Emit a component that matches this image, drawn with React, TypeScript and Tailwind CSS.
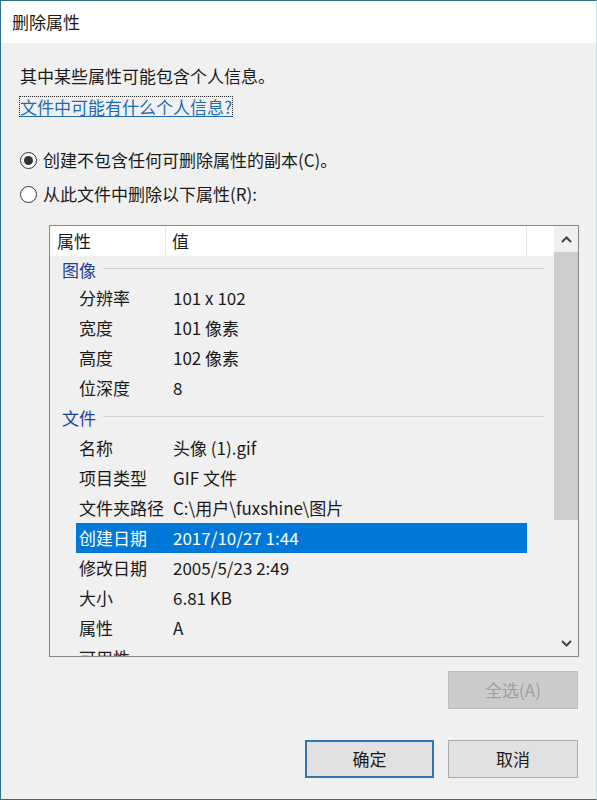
import React from 'react'

const font = { fontFamily: '"Noto Sans CJK SC", "Noto Sans", sans-serif' }

type Row = { label: string; value?: string; group?: boolean; selected?: boolean; h?: string }

const rows: Row[] = [
    { label: '图像', group: true, h: 'h-[27px]' },
    { label: '分辨率', value: '101 x 102' },
    { label: '宽度', value: '101 像素' },
    { label: '高度', value: '102 像素' },
    { label: '位深度', value: '8' },
    { label: '文件', group: true },
    { label: '名称', value: '头像 (1).gif' },
    { label: '项目类型', value: 'GIF 文件' },
    { label: '文件夹路径', value: 'C:\\用户\\fuxshine\\图片' },
    { label: '创建日期', value: '2017/10/27 1:44', selected: true },
    { label: '修改日期', value: '2005/5/23 2:49' },
    { label: '大小', value: '6.81 KB' },
    { label: '属性', value: 'A' },
    { label: '可用性', value: '' },
]

function Radio({ checked, label }: { checked?: boolean; label: string }) {
    return (
        <div className="flex items-center h-[34px]">
            <span className="w-[17px] h-[17px] rounded-full border border-[#333] bg-white flex items-center justify-center">
                {checked && <span className="w-[9px] h-[9px] rounded-full bg-[#333]" />}
            </span>
            <span className="ml-[6px] text-[17px] leading-[34px] text-[#1a1a1a]">{label}</span>
        </div>
    )
}

function PropertyList() {
    return (
        <div className="ml-[29px] w-[530px] h-[432px] border border-[#828790] flex overflow-hidden">
            <div className="flex-1 flex flex-col overflow-hidden">
                {/* 表头 */}
                <div className="h-[30px] shrink-0 bg-white flex text-[17px] leading-[30px] text-[#1a1a1a]">
                    <div className="w-[116px] pl-[7px] border-r border-[#e5e5e5]">属性</div>
                    <div className="w-[361px] pl-[6px] border-r border-[#e5e5e5]">值</div>
                    <div className="flex-1" />
                </div>
                {rows.map((r) =>
                    r.group ? (
                        <div key={r.label} className={`${r.h ?? 'h-[30px]'} shrink-0 flex items-center pl-[12px] pr-[10px]`}>
                            <span className="text-[17px] leading-[20px] text-[#233f94]">{r.label}</span>
                            <span className="flex-1 ml-[7px] h-px bg-[#d2d2d2] -mt-[3px]" />
                        </div>
                    ) : (
                        <div key={r.label} className="h-[30px] shrink-0 pl-[26px]">
                            <div
                                className={`w-[451px] h-[30px] flex text-[17px] leading-[30px] ${
                                    r.selected ? 'bg-[#0078d7] text-white' : 'text-[#1a1a1a]'
                                }`}
                            >
                                <span className="w-[97px] pl-[3px] whitespace-nowrap">{r.label}</span>
                                <span className="whitespace-nowrap">{r.value}</span>
                            </div>
                        </div>
                    )
                )}
            </div>
            {/* 滚动条 */}
            <div className="w-[24px] shrink-0 flex flex-col bg-[#f0f0f0]">
                <div className="h-[26px] shrink-0 flex items-center justify-center">
                    <svg width="11" height="7" viewBox="0 0 11 7">
                        <path d="M1 6 L5.5 1.5 L10 6" fill="none" stroke="#444" strokeWidth="2" />
                    </svg>
                </div>
                <div className="h-[268px] shrink-0 bg-[#cdcdcd]" />
                <div className="flex-1" />
                <div className="h-[26px] shrink-0 flex items-center justify-center">
                    <svg width="11" height="7" viewBox="0 0 11 7">
                        <path d="M1 1 L5.5 5.5 L10 1" fill="none" stroke="#444" strokeWidth="2" />
                    </svg>
                </div>
            </div>
        </div>
    )
}

export default function App() {
    return (
        <div
            className="w-[597px] h-[800px] flex flex-col bg-[#f0f0f0] border-l border-t border-b border-l-[#2f6f88] border-t-[#2f6f88] border-b-[#2f6f88] border-r border-r-[#bfe3ec] overflow-hidden"
            style={font}
        >
            <div className="h-[42px] shrink-0 bg-white flex items-center pl-[11px] text-[17px] text-[#1a1a1a]">
                删除属性
            </div>

            <div className="flex-1 flex flex-col pl-[19px] pr-[18px] pt-[17px]">
                <div className="text-[17px] leading-[31px] text-[#1a1a1a]">其中某些属性可能包含个人信息。</div>
                <div className="h-[31px] flex items-center">
                    <span className="-ml-px inline-block border border-dotted border-[#222] text-[17px] leading-[19px] text-[#1d6bb0] underline underline-offset-2">
                        文件中可能有什么个人信息?
                    </span>
                </div>

                <div className="mt-[21px]">
                    <Radio checked label="创建不包含任何可删除属性的副本(C)。" />
                    <Radio label="从此文件中删除以下属性(R):" />
                </div>

                <div className="mt-[14px]">
                    <PropertyList />
                </div>

                <div className="mt-[14px] flex justify-end">
                    <div className="w-[130px] h-[38px] bg-[#cccccc] border border-[#bfbfbf] flex items-center justify-center text-[17px] text-[#a0a0a0]">
                        全选(A)
                    </div>
                </div>

                <div className="mt-[31px] flex justify-end gap-[14px]">
                    <div className="w-[129px] h-[38px] bg-[#e1e1e1] border-2 border-[#2f76b4] flex items-center justify-center text-[17px] text-[#1a1a1a]">
                        确定
                    </div>
                    <div className="w-[130px] h-[38px] bg-[#e1e1e1] border border-[#adadad] flex items-center justify-center text-[17px] text-[#1a1a1a]">
                        取消
                    </div>
                </div>
            </div>
        </div>
    )
}
